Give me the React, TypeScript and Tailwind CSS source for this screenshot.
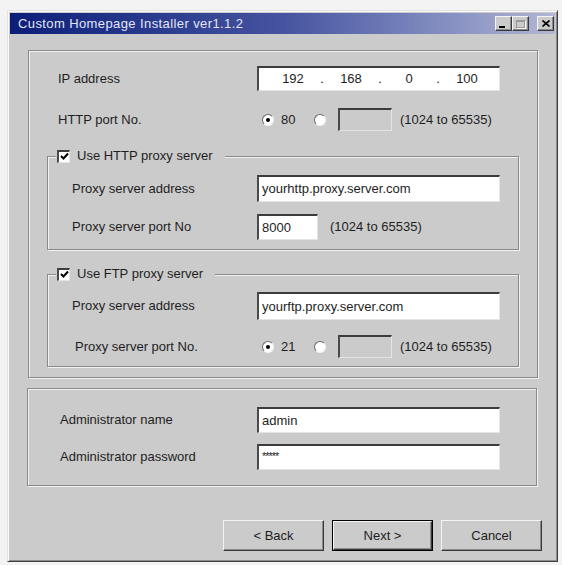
import React from 'react';

// Classic 3D edges used by the dialog controls
const sunken =
  'border-t-2 border-l-2 border-r border-b border-t-[#3c3c3c] border-l-[#4a4a4a] border-r-[#e4e4e4] border-b-[#e4e4e4]';
const raised =
  'border border-t-[#f4f4f4] border-l-[#f4f4f4] border-r-[#3a3a3a] border-b-[#3a3a3a] shadow-[inset_-1px_-1px_0_#8a8a8a]';
const etched = 'border border-[#8a8a8a] shadow-[inset_1px_1px_0_#f2f2f2,1px_1px_0_#f2f2f2]';

const Radio: React.FC<{ checked?: boolean }> = ({ checked }) => (
  <span className="flex h-[12px] w-[12px] shrink-0 items-center justify-center rounded-full border border-t-[#6a6a6a] border-l-[#6a6a6a] border-r-[#f4f4f4] border-b-[#f4f4f4] bg-white">
    {checked && <span className="h-[4px] w-[4px] rounded-full bg-black" />}
  </span>
);

const Checkbox: React.FC = () => (
  <span className={`flex h-[13px] w-[13px] shrink-0 items-center justify-center bg-white ${sunken}`}>
    <svg width="9" height="9" viewBox="0 0 9 9">
      <path d="M1 4 L3.5 6.5 L8 1.5" fill="none" stroke="#000" strokeWidth="2" />
    </svg>
  </span>
);

const TextBox: React.FC<{ value?: string; className?: string; disabled?: boolean }> = ({
  value,
  className = '',
  disabled,
}) => (
  <div
    className={`flex items-center pl-[3px] ${disabled ? 'bg-[#cbcbcb]' : 'bg-white'} ${sunken} ${className}`}
  >
    {value}
  </div>
);

const Legend: React.FC<{ text: string }> = ({ text }) => (
  <div className="-mt-[9px] ml-[8px] flex h-[16px] w-fit items-center gap-[7px] bg-[#cbcbcb] pl-[1px] pr-[12px]">
    <Checkbox />
    <span>{text}</span>
  </div>
);

const PortChoice: React.FC<{ preset: string }> = ({ preset }) => (
  <div className="flex h-[23px] items-center">
    <span className="ml-[5px]">
      <Radio checked />
    </span>
    <span className="ml-[7px] w-[33px]">{preset}</span>
    <Radio />
    <TextBox disabled className="ml-[12px] h-[23px] w-[54px]" />
    <span className="ml-[8px]">(1024 to 65535)</span>
  </div>
);

const Button: React.FC<{ label: string; isDefault?: boolean }> = ({ label, isDefault }) => (
  <div className={isDefault ? 'border border-black' : ''}>
    <div
      className={`flex items-center justify-center ${raised} ${
        isDefault ? 'h-[29px] w-[99px]' : 'h-[31px] w-[101px]'
      }`}
    >
      {label}
    </div>
  </div>
);

const CaptionButton: React.FC<{ children: React.ReactNode }> = ({ children }) => (
  <div className={`flex h-[15px] w-[17px] items-center justify-center bg-[#cbcbcb] ${raised}`}>
    {children}
  </div>
);

export default function App() {
  return (
    <div className="min-h-screen bg-[#f3f3f3] pl-[7px] pt-[10px] font-['Liberation_Sans',Arial,sans-serif] text-[13px] text-[#1e1e1e]">
      <div className="h-[552px] w-[551px] border border-t-[#e2e2e2] border-l-[#e2e2e2] border-r-[#404040] border-b-[#404040] bg-[#cbcbcb] p-[2px] shadow-[inset_1px_1px_0_#fafafa,inset_-1px_-1px_0_#8a8a8a]">
        {/* title bar */}
        <div className="flex h-[21px] items-center bg-gradient-to-r from-[#0c1d78] via-[#4653a0] to-[#b3b7d4] pl-[8px] pr-[1px]">
          <span className="tracking-[0.4px] text-[#e4e6f6]">Custom Homepage Installer ver1.1.2</span>
          <div className="ml-auto flex items-center">
            <CaptionButton>
              <span className="mt-[6px] mr-[3px] h-[2px] w-[6px] bg-black" />
            </CaptionButton>
            <CaptionButton>
              <span className="h-[8px] w-[9px] border border-t-2 border-[#9a9a9a] shadow-[1px_1px_0_#f4f4f4]" />
            </CaptionButton>
            <div className="ml-[8px]">
              <CaptionButton>
                <svg width="8" height="7" viewBox="0 0 8 7">
                  <path d="M0.5 0.5 L7.5 6.5 M7.5 0.5 L0.5 6.5" stroke="#000" strokeWidth="1.6" />
                </svg>
              </CaptionButton>
            </div>
          </div>
        </div>

        {/* network settings */}
        <div className={`ml-[18px] mt-[16px] h-[328px] w-[510px] ${etched}`}>
          <div className="mt-[15px] flex h-[25px] items-center">
            <span className="w-[228px] pl-[29px]">IP address</span>
            <div className={`flex h-[25px] w-[243px] items-center bg-white pl-[11px] ${sunken}`}>
              <span className="w-[46px] text-center">192</span>
              <span className="w-[12px] text-center">.</span>
              <span className="w-[46px] text-center">168</span>
              <span className="w-[12px] text-center">.</span>
              <span className="w-[46px] text-center">0</span>
              <span className="w-[12px] text-center">.</span>
              <span className="w-[46px] text-center">100</span>
            </div>
          </div>
          <div className="mt-[17px] flex items-center">
            <span className="w-[228px] pl-[29px]">HTTP port No.</span>
            <PortChoice preset="80" />
          </div>

          {/* HTTP proxy group */}
          <div className={`ml-[18px] mt-[25px] w-[472px] pb-[9px] ${etched}`}>
            <Legend text="Use HTTP proxy server" />
            <div className="mt-[11px] flex items-center">
              <span className="w-[209px] pl-[24px]">Proxy server address</span>
              <TextBox value="yourhttp.proxy.server.com" className="h-[27px] w-[243px]" />
            </div>
            <div className="mt-[12px] flex items-center">
              <span className="w-[209px] pl-[24px]">Proxy server port No</span>
              <TextBox value="8000" className="h-[26px] w-[61px]" />
              <span className="ml-[12px]">(1024 to 65535)</span>
            </div>
          </div>

          {/* FTP proxy group */}
          <div className={`ml-[18px] mt-[24px] w-[472px] pb-[8px] ${etched}`}>
            <Legend text="Use FTP proxy server" />
            <div className="mt-[10px] flex items-center">
              <span className="w-[209px] pl-[24px]">Proxy server address</span>
              <TextBox value="yourftp.proxy.server.com" className="h-[28px] w-[243px]" />
            </div>
            <div className="mt-[15px] flex items-center">
              <span className="w-[209px] pl-[27px]">Proxy server port No.</span>
              <PortChoice preset="21" />
            </div>
          </div>
        </div>

        {/* administrator account */}
        <div className={`ml-[17px] mt-[10px] h-[98px] w-[510px] ${etched}`}>
          <div className="mt-[18px] flex items-center">
            <span className="w-[229px] pl-[32px]">Administrator name</span>
            <TextBox value="admin" className="h-[26px] w-[243px]" />
          </div>
          <div className="mt-[11px] flex items-center">
            <span className="w-[229px] pl-[32px]">Administrator password</span>
            <div className={`h-[26px] w-[243px] bg-white pl-[3px] ${sunken}`}>
              <span className="text-[11px] leading-[14px] tracking-[-1px]">*****</span>
            </div>
          </div>
        </div>

        <div className="ml-[213px] mt-[34px] flex items-center gap-[8px]">
          <Button label="< Back" />
          <Button label="Next >" isDefault />
          <Button label="Cancel" />
        </div>
      </div>
    </div>
  );
}
